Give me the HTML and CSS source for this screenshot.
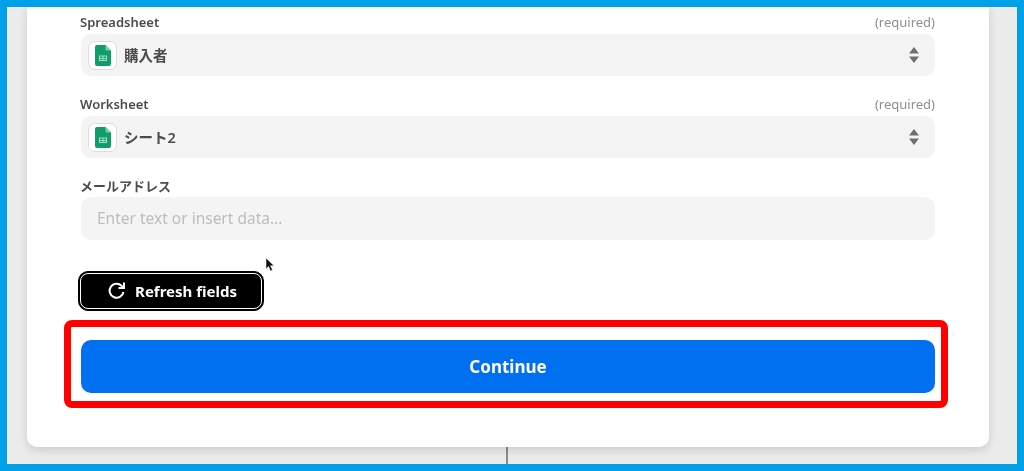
FILE: index.html
```html
<!DOCTYPE html>
<html lang="en">

<head>
  <meta charset="UTF-8">
  <meta name="viewport" content="width=device-width, initial-scale=1">
  <title>Set up action</title>
  <link rel="stylesheet" href="styles.css">
</head>

<body>
  <div class="frame">
    <div class="card">
      <div class="field">
        <div class="field-label"><span>Spreadsheet</span><span class="required">(required)</span></div>
        <div class="select">
          <span class="app-icon">
            <svg width="16" height="21" viewBox="0 0 16 21">
              <path d="M2 0H10.500L16 5.500V19a2 2 0 0 1-2 2H2a2 2 0 0 1-2-2V2a2 2 0 0 1 2-2z" fill="#0f9d6b" />
              <path d="M10.500 0L16 5.500H12a1.500 1.500 0 0 1-1.500-1.500z" fill="#7fcdaa" />
              <path d="M4 10.500H12V16H4z M5 11.500V13H7.500V11.500z M8.500 11.500V13H11V11.500z M5 14V15H7.500V14z M8.500 14V15H11V14z" fill="#a8dcc4" fill-rule="evenodd" />
            </svg>
          </span>
          <span class="select-value">購入者</span>
          <svg class="arrows" width="10" height="16" viewBox="0 0 10 16">
            <path d="M5 0L10 6.500H0z M5 16L0 9.500H10z" fill="#6f6f6f" />
          </svg>
        </div>
      </div>

      <div class="field">
        <div class="field-label"><span>Worksheet</span><span class="required">(required)</span></div>
        <div class="select">
          <span class="app-icon">
            <svg width="16" height="21" viewBox="0 0 16 21">
              <path d="M2 0H10.500L16 5.500V19a2 2 0 0 1-2 2H2a2 2 0 0 1-2-2V2a2 2 0 0 1 2-2z" fill="#0f9d6b" />
              <path d="M10.500 0L16 5.500H12a1.500 1.500 0 0 1-1.500-1.500z" fill="#7fcdaa" />
              <path d="M4 10.500H12V16H4z M5 11.500V13H7.500V11.500z M8.500 11.500V13H11V11.500z M5 14V15H7.500V14z M8.500 14V15H11V14z" fill="#a8dcc4" fill-rule="evenodd" />
            </svg>
          </span>
          <span class="select-value">シート2</span>
          <svg class="arrows" width="10" height="16" viewBox="0 0 10 16">
            <path d="M5 0L10 6.500H0z M5 16L0 9.500H10z" fill="#6f6f6f" />
          </svg>
        </div>
      </div>

      <div class="field field-text">
        <div class="field-label"><span>メールアドレス</span></div>
        <div class="input">Enter text or insert data...</div>
      </div>

      <button class="refresh">
        <svg width="20" height="20" viewBox="0 0 20 20" fill="none" stroke="#fff" stroke-width="2">
          <path d="M16.500 11a7 7 0 1 1-2-6.300L16.500 6.500" />
          <path d="M17 1.500V7H11.500" stroke-width="2" />
        </svg>
        Refresh fields
      </button>

      <button class="continue">Continue</button>
    </div>
    <div class="connector"></div>

    <!-- annotation and cursor sit over the page -->
    <div class="highlight"></div>
    <svg class="cursor" width="10" height="15" viewBox="0 0 10 15">
      <path d="M1 1V12L3.500 9.500L5.500 14L7.500 13L5.500 8.800H9z" fill="#111" stroke="#fff" stroke-width="0.500" />
    </svg>
  </div>
</body>

</html>
```

FILE: styles.css
```css
* {
  box-sizing: border-box;
}

body {
  margin: 0;
  font-family: "Noto Sans", "Open Sans", "Noto Sans CJK JP", sans-serif;
}

.frame {
  position: relative;
  width: 1024px;
  height: 471px;
  border: 7px solid #00a1e9;
  background-color: #ebebeb;
  overflow: hidden;
}

.card {
  width: 962px;
  height: 440px;
  margin-left: 20px;
  padding: 6px 54px 0;
  background-color: #fff;
  border-radius: 0 0 10px 10px;
  box-shadow: 0 3px 10px rgba(0, 0, 0, 0.14);
  filter: blur(0.4px);
}

.field {
  margin-bottom: 19px;
}

.field-label {
  display: flex;
  justify-content: space-between;
  height: 18px;
  margin-bottom: 3px;
  margin-left: -1px;
  font-size: 13px;
  line-height: 18px;
  font-weight: 600;
  color: #4c4c4c;
}

.required {
  font-weight: 400;
  font-size: 13px;
  color: #8f8f8f;
}

.select {
  display: flex;
  align-items: center;
  height: 42px;
  padding: 0 16px 0 7px;
  background-color: #f4f4f4;
  border-radius: 10px;
}

.app-icon {
  display: flex;
  align-items: center;
  justify-content: center;
  width: 29px;
  height: 29px;
  background-color: #fff;
  border: 1px solid #dcdcdc;
  border-radius: 7px;
}

.select-value {
  flex: 1;
  margin-left: 7px;
  margin-top: -2px;
  font-size: 14.500px;
  font-weight: 600;
  color: #4a4a4a;
}

.field-text {
  margin-bottom: 31px;
}

.field-text .field-label {
  margin-bottom: 2px;
}

.input {
  height: 43px;
  padding: 0 16px;
  background-color: #f4f4f4;
  border-radius: 10px;
  font-size: 15.500px;
  line-height: 43px;
  color: #bdbdbd;
}

.refresh {
  display: flex;
  align-items: center;
  justify-content: center;
  gap: 8px;
  width: 186px;
  height: 40px;
  margin-left: -3px;
  padding: 0 0 0 2px;
  background-color: #000;
  border: 1px solid #000;
  border-radius: 10px;
  outline: 1.500px solid #fff;
  outline-offset: -3.500px;
  font-family: inherit;
  font-size: 15px;
  font-weight: 700;
  color: #fff;
}

.continue {
  display: block;
  width: 854px;
  height: 53px;
  margin-top: 29px;
  background-color: #006ff0;
  border: none;
  border-radius: 10px;
  font-family: inherit;
  font-size: 17px;
  font-weight: 700;
  color: #fff;
}

.connector {
  width: 2px;
  height: 17px;
  margin-left: 499px;
  background-color: #8c8c8c;
}

.highlight {
  position: absolute;
  left: 57px;
  top: 313px;
  width: 884px;
  height: 88px;
  border: 7px solid #ff0000;
  border-radius: 8px;
}

.cursor {
  position: absolute;
  left: 258px;
  top: 250px;
}
```
